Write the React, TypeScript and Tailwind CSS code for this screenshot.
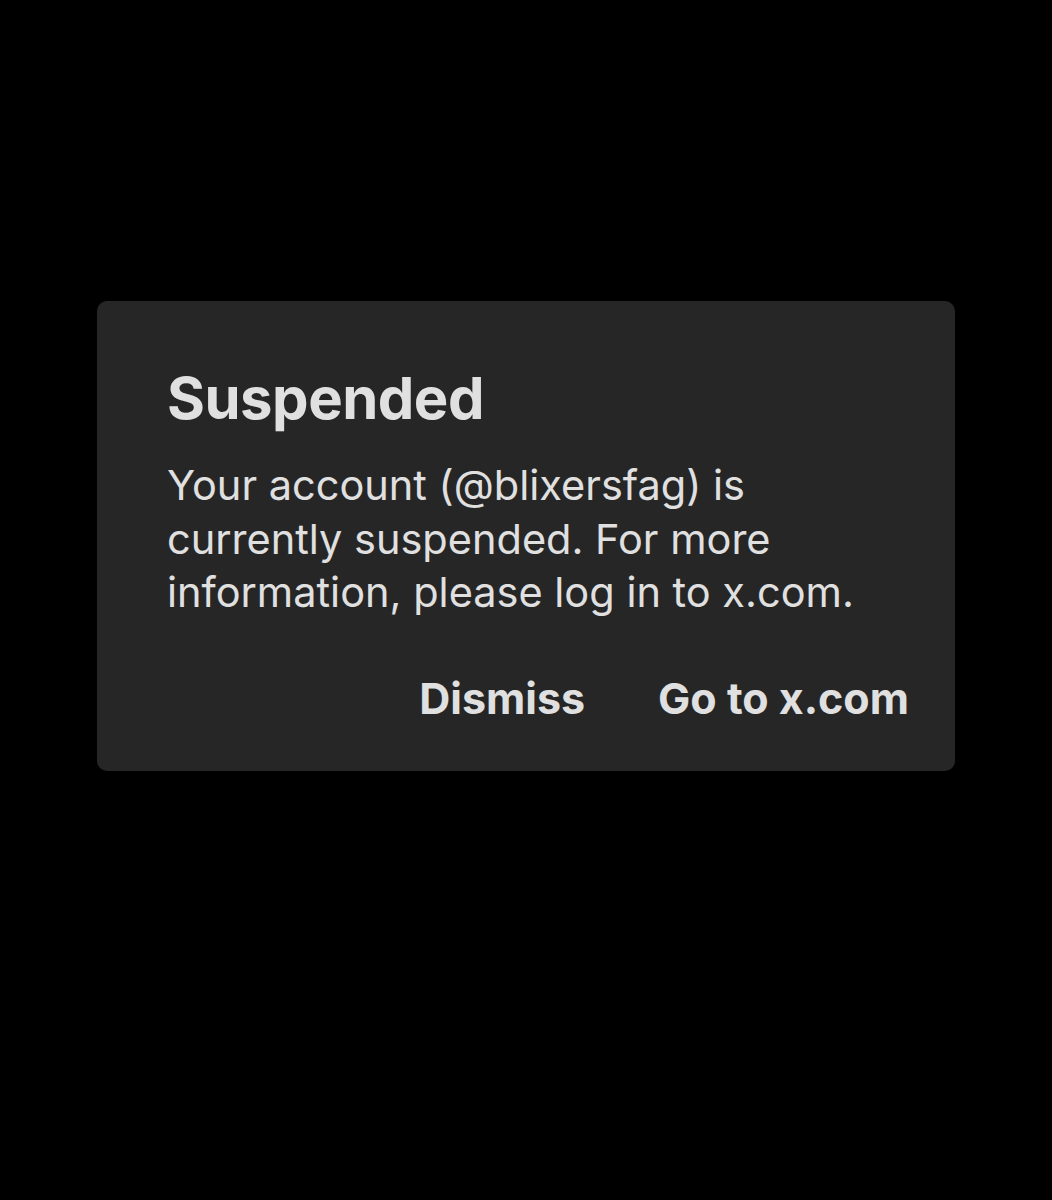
export default function App() {
  return (
    <div className="min-h-[1200px] w-full bg-black flex flex-col items-center pt-[301px]" style={{ fontFamily: 'Inter, "Noto Sans", sans-serif' }}>
      <div className="w-[858px] h-[470px] bg-[#262626] rounded-[10px] flex flex-col pl-[70px] pr-[46px] pt-[62px] text-[#e0e0e0]">
        <h1 className="text-[58px] leading-[70px] font-bold tracking-[-0.5px]">Suspended</h1>
        <p className="mt-[26px] text-[41.5px] leading-[53.5px] pr-[20px]">
          Your account (@blixersfag) is currently suspended. For more information, please log in to x.com.
        </p>
        <div className="mt-[50px] flex justify-end gap-[73px]">
          <button className="text-[43px] leading-[56px] font-bold">Dismiss</button>
          <button className="text-[43px] leading-[56px] font-bold">Go to x.com</button>
        </div>
      </div>
    </div>
  );
}
